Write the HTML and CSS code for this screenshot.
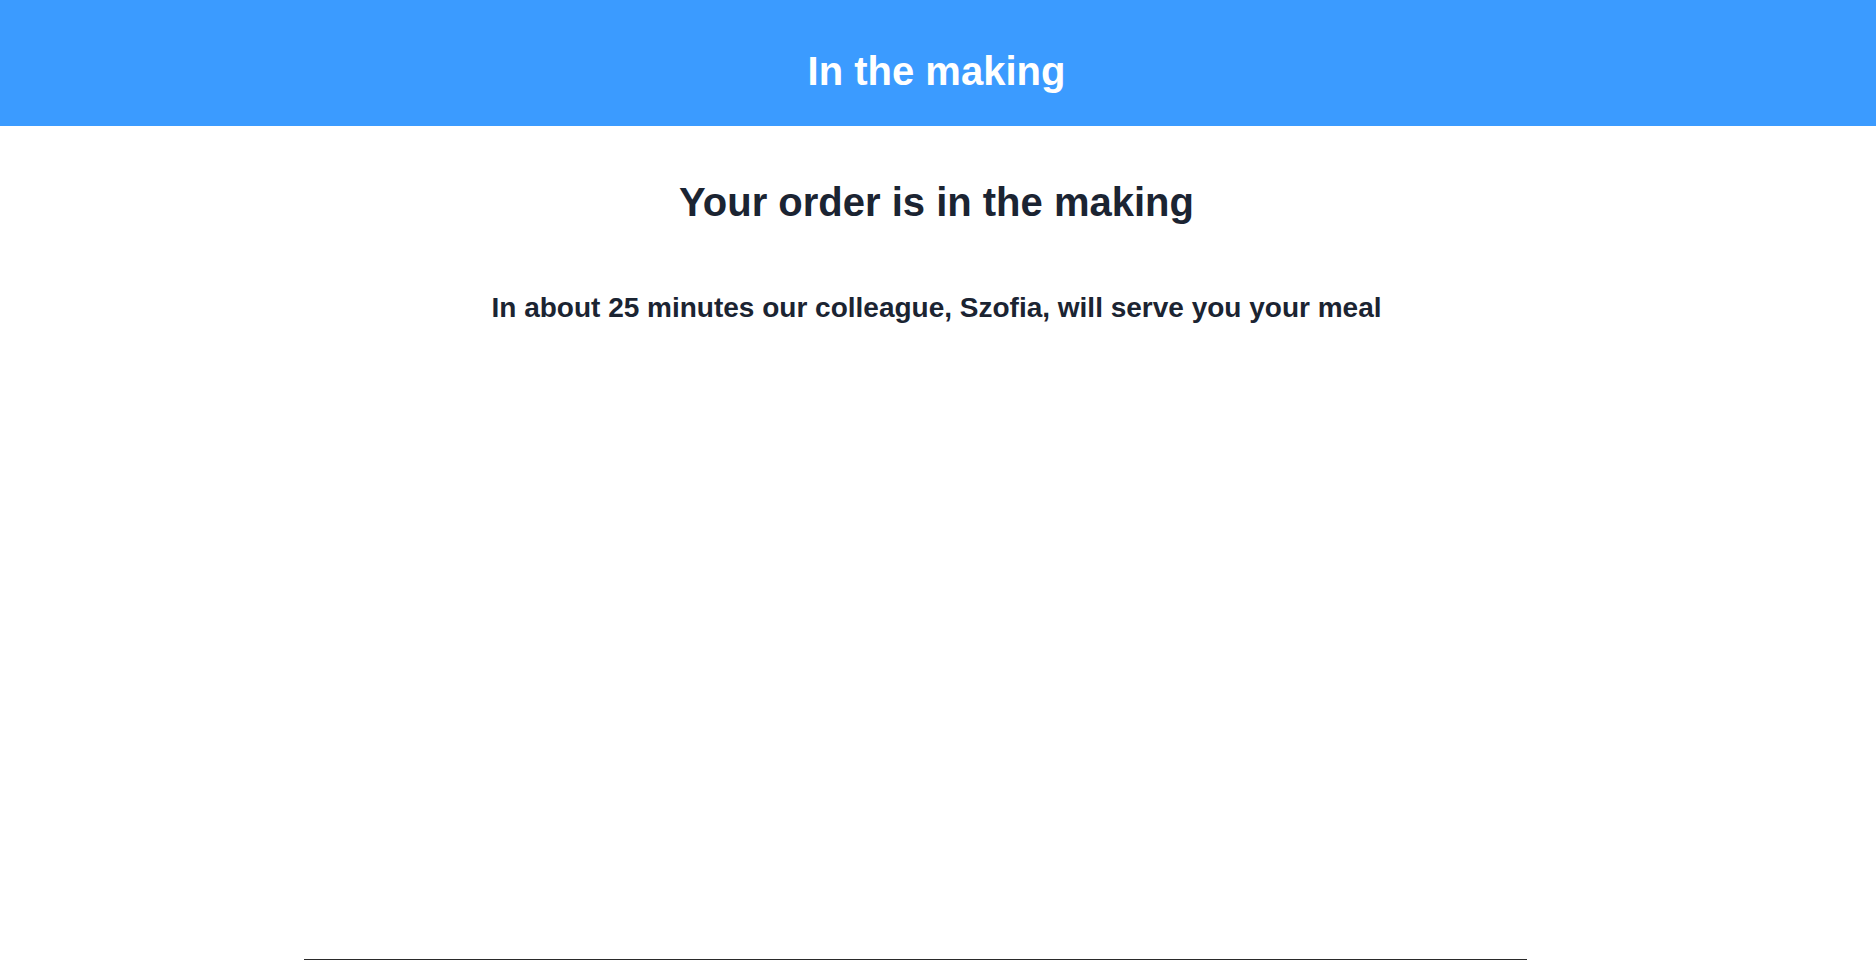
FILE: index.html
```html
<!DOCTYPE html>
<html lang="en">
<head>
<meta charset="utf-8">
<title>In the making</title>
<link rel="stylesheet" href="styles.css">
</head>
<body>
<div class="page">
  <header class="topbar">
    <h1 class="topbar-title">In the making</h1>
  </header>
  <main class="content">
    <h2 class="status-title">Your order is in the making</h2>
    <h3 class="status-text">In about 25 minutes our colleague, Szofia, will serve you your meal</h3>
  </main>
  <footer class="footer"></footer>
</div>
</body>
</html>
```

FILE: styles.css
```css
html, body {
  margin: 0;
  padding: 0;
  background: #ffffff;
}

body {
  font-family: "Liberation Sans", Arial, sans-serif;
  color: #1b2432;
}

.page {
  min-height: 100vh;
  display: flex;
  flex-direction: column;
}

.topbar {
  background: #3b9bff;
  height: 126px;
  box-sizing: border-box;
  padding-top: 47px;
  padding-right: 3px;
}

.topbar-title {
  margin: 0;
  text-align: center;
  color: #ffffff;
  font-size: 40px;
  line-height: 48px;
  font-weight: 700;
}

.content {
  flex: 1;
  display: flex;
  flex-direction: column;
  align-items: center;
  padding-top: 52px;
  padding-right: 3px;
}

.status-title {
  margin: 0;
  font-size: 40px;
  line-height: 48px;
  font-weight: 700;
  text-align: center;
}

.status-text {
  margin: 65px 0 0;
  font-size: 28px;
  line-height: 34px;
  font-weight: 700;
  text-align: center;
}

.footer {
  height: 0;
  margin-left: 304px;
  width: 1223px;
  border-top: 1px solid #2a2a2a;
  margin-bottom: 1px;
}
```
